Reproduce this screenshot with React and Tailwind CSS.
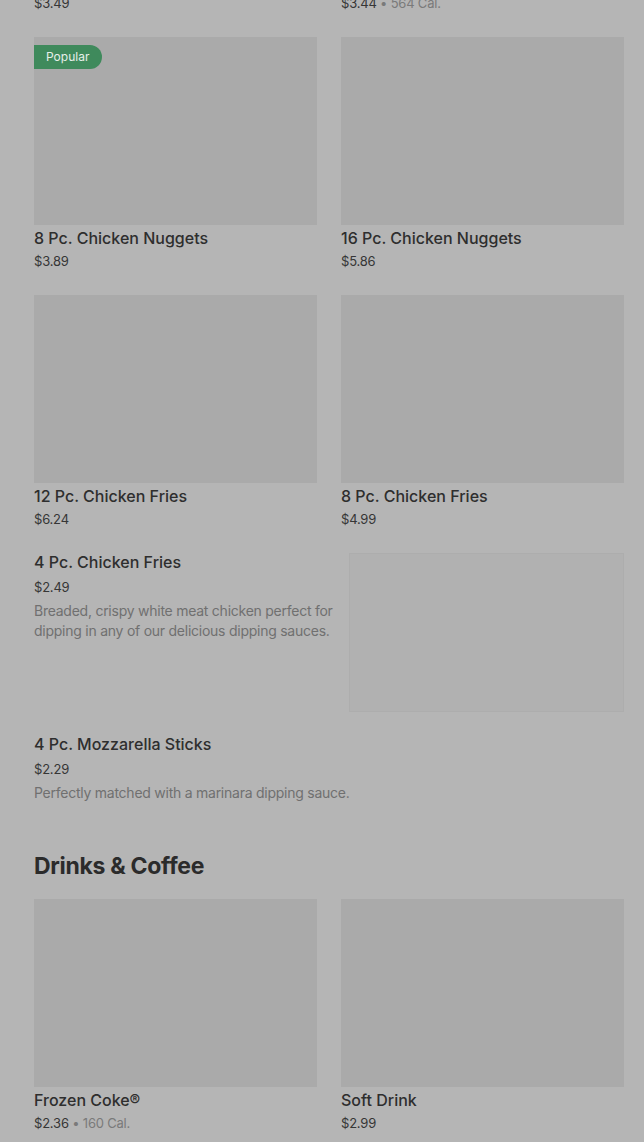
import React from 'react';

const gridItems = [
  { name: '8 Pc. Chicken Nuggets', price: '$3.89', popular: true },
  { name: '16 Pc. Chicken Nuggets', price: '$5.86' },
  { name: '12 Pc. Chicken Fries', price: '$6.24' },
  { name: '8 Pc. Chicken Fries', price: '$4.99' },
];

const drinks = [
  { name: 'Frozen Coke®', price: '$2.36', cal: '160 Cal.' },
  { name: 'Soft Drink', price: '$2.99' },
];

function PriceLine({ price, cal }) {
  return (
    <p className="text-[13px] leading-5 tracking-[-0.2px] text-[#363636]">
      {price}
      {cal && <span className="text-[#7a7a7a]"> • {cal}</span>}
    </p>
  );
}

function GridCard({ item }) {
  return (
    <div className="flex flex-col">
      <div className="relative h-[188px] w-full bg-[#aaaaaa]">
        {item.popular && (
          <span className="absolute left-0 top-2 h-6 rounded-r-full bg-[#3f8a5c] pl-3 pr-[13px] text-[12px] leading-6 text-[#e6efe9]">
            Popular
          </span>
        )}
      </div>
      <h3 className="mt-px text-[16px] font-medium leading-6 text-[#2e2e2e]">{item.name}</h3>
      <div className="mt-px">
        <PriceLine price={item.price} cal={item.cal} />
      </div>
    </div>
  );
}

function ListItem({ name, price, desc, image }) {
  return (
    <div className="flex items-start gap-3">
      <div className="flex-1">
        <h3 className="text-[16px] font-medium leading-6 text-[#2e2e2e]">{name}</h3>
        <div className="mt-[3px]">
          <PriceLine price={price} />
        </div>
        <p className="mt-1 text-[14px] leading-5 tracking-[-0.25px] text-[#707070]">{desc}</p>
      </div>
      {image && <div className="mt-[3px] h-[159px] w-[275px] shrink-0 border border-[#adadad] bg-[#b1b1b1]" />}
    </div>
  );
}

export default function App() {
  return (
    <div className="min-h-screen w-full overflow-hidden bg-[#b5b5b5] pl-[34px] pr-5 font-['Inter',sans-serif]">
      <div className="-mt-[7px] grid grid-cols-2 gap-6">
        <PriceLine price="$3.49" />
        <PriceLine price="$3.44" cal="564 Cal." />
      </div>

      <div className="mt-6 grid grid-cols-2 gap-x-6 gap-y-6">
        {gridItems.map((item) => (
          <GridCard key={item.name} item={item} />
        ))}
      </div>

      <div className="mt-[21px]">
        <ListItem
          name="4 Pc. Chicken Fries"
          price="$2.49"
          desc="Breaded, crispy white meat chicken perfect for dipping in any of our delicious dipping sauces."
          image
        />
      </div>

      <div className="mt-5">
        <ListItem
          name="4 Pc. Mozzarella Sticks"
          price="$2.29"
          desc="Perfectly matched with a marinara dipping sauce."
        />
      </div>

      <h2 className="mt-[47px] text-[23px] font-bold leading-8 tracking-[-0.3px] text-[#2b2b2b]">Drinks &amp; Coffee</h2>

      <div className="mt-[17px] grid grid-cols-2 gap-6">
        {drinks.map((item) => (
          <GridCard key={item.name} item={item} />
        ))}
      </div>
    </div>
  );
}
